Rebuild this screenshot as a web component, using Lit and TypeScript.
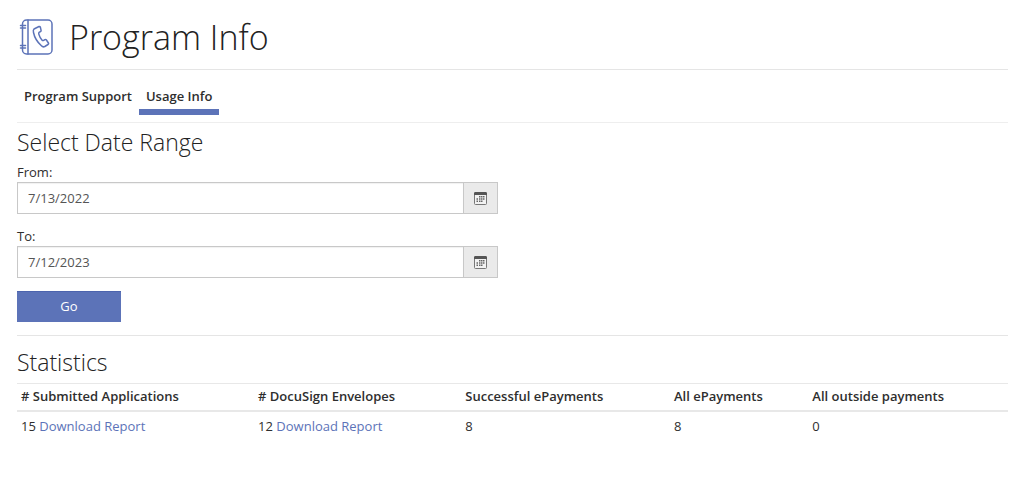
import { LitElement, html, css } from "lit";
import { customElement, property, state } from "lit/decorators.js";

@customElement("date-field")
class DateField extends LitElement {
  @property() label = "";
  @property() value = "";

  static styles = css`
    :host {
      display: block;
    }
    .label {
      display: block;
      line-height: 20px;
    }
    .group {
      display: flex;
      height: 32px;
      box-sizing: border-box;
      border: 1px solid #c8c8c8;
    }
    .input {
      flex: 1;
      min-width: 0;
      padding: 0 10px;
      border: 0;
      background: #fff;
      box-shadow: inset 0 1px 1px rgba(0, 0, 0, 0.06);
      color: #555;
      font: inherit;
    }
    .picker {
      display: flex;
      align-items: center;
      justify-content: center;
      width: 34px;
      padding: 0;
      border: 0;
      border-left: 1px solid #c8c8c8;
      background: #eaeaea;
      cursor: pointer;
    }
  `;

  render() {
    return html`
      <label class="label" for="date">${this.label}</label>
      <div class="group">
        <input class="input" id="date" type="text" .value=${this.value} />
        <button class="picker" type="button" aria-label="Open calendar">
          <svg width="13" height="13" viewBox="0 0 13 13" fill="#666">
            <rect x="0.5" y="0.5" width="12" height="12" rx="1" fill="#f2f2f2" stroke="#777" />
            <path fill="#555" d="M1 0h11l1 1v2H0V1z" />
            <path
              d="M5 4h1.5v1.5H5zM7 4h1.5v1.5H7zM9 4h1.5v1.5H9zM2.5 6.2H4v1.5H2.5zM5 6.2h1.5v1.5H5zM7 6.2h1.5v1.5H7zM9 6.2h1.5v1.5H9zM2.5 8.5H4V10H2.5zM5 8.5h1.5V10H5zM7 8.5h1.5V10H7z"
            />
          </svg>
        </button>
      </div>
    `;
  }
}

@customElement("app-root")
class AppRoot extends LitElement {
  @state() private tabs = [
    { name: "Program Support", active: false },
    { name: "Usage Info", active: true },
  ];
  @state() private stats = [
    { title: "# Submitted Applications", count: 15, report: true },
    { title: "# DocuSign Envelopes", count: 12, report: true },
    { title: "Successful ePayments", count: 8, report: false },
    { title: "All ePayments", count: 8, report: false },
    { title: "All outside payments", count: 0, report: false },
  ];

  static styles = css`
    :host {
      display: block;
      padding: 0 17px;
      background: #fff;
      color: #2e2e2e;
      font: 13px/20px "Open Sans", sans-serif;
    }
    .header {
      display: flex;
      align-items: center;
      gap: 13px;
      height: 70px;
      padding-top: 4px;
      box-sizing: border-box;
      border-bottom: 1px solid #e5e5e5;
    }
    .title,
    .heading {
      margin: 0;
      font-weight: 300;
      color: #222;
    }
    .title {
      font-size: 34px;
      line-height: 40px;
    }
    .heading {
      padding-bottom: 4px;
      font-size: 23px;
      line-height: 32px;
    }
    .tabs {
      display: flex;
      padding-top: 16px;
      padding-bottom: 7px;
      border-bottom: 1px solid #eee;
    }
    .tab {
      padding: 0 7px 3px;
      border-bottom: 6px solid transparent;
      color: inherit;
      font-weight: 600;
      text-decoration: none;
    }
    .tab.active {
      border-color: #5c73b8;
    }
    .range {
      display: grid;
      gap: 13px;
      padding: 3px 0 13px;
      border-bottom: 1px solid #e5e5e5;
    }
    .fields {
      display: grid;
      gap: 12px;
      width: calc(50% - 15px);
    }
    .go {
      justify-self: start;
      width: 104px;
      height: 31px;
      padding: 0 0 2px;
      border: 0;
      background: #5c73b8;
      box-shadow: inset 0 1px 0 #4c64ae;
      color: #fff;
      font: inherit;
      cursor: pointer;
    }
    .statistics {
      padding-top: 10px;
    }
    .table {
      width: 100%;
      margin-top: 1px;
      border-collapse: collapse;
    }
    .th,
    .td {
      padding: 4px;
      text-align: left;
    }
    .th {
      padding-top: 2px;
      border-top: 1px solid #e8e8e8;
      border-bottom: 2px solid #e8e8e8;
      font-weight: 600;
    }
    .link {
      color: #5c73b8;
      text-decoration: none;
    }
  `;

  render() {
    return html`
      <header class="header">
        <svg
          width="39"
          height="38"
          viewBox="0 0 39 38"
          fill="none"
          stroke="#5c73b8"
          stroke-width="1.5"
          stroke-linecap="round"
          stroke-linejoin="round"
          aria-hidden="true"
        >
          <rect x="5.5" y="2" width="29.5" height="34" rx="4" />
          <path d="M11 2v34M3.5 7.5h5M3.5 10h5M3.5 27.5h5M3.5 30h5" />
          <path
            d="M17 11 22 8.5q1-.3 1.4.8l.7 3q.2 1-.8 1.4l-1.2.7q-.7.6-.2 2 .9 3.3 3.2 5.8.7.7 1.6.1l1.2-.7q.9-.4 1.5.4l2 3q.6.9-.4 1.5l-3.2 2q-1.8 1-3.4-.7-6.4-5.8-7.9-13.3-.6-2.5.5-3.5z"
          />
        </svg>
        <h1 class="title">Program Info</h1>
      </header>
      <nav class="tabs">
        ${this.tabs.map(
          (tab) => html`<a class="tab ${tab.active ? "active" : ""}" href="#">${tab.name}</a>`
        )}
      </nav>
      <form class="range" @submit=${(e: Event) => e.preventDefault()}>
        <div>
          <h2 class="heading">Select Date Range</h2>
          <div class="fields">
            <date-field label="From:" value="7/13/2022"></date-field>
            <date-field label="To:" value="7/12/2023"></date-field>
          </div>
        </div>
        <button class="go" type="submit">Go</button>
      </form>
      <section class="statistics">
        <h2 class="heading">Statistics</h2>
        <table class="table">
          <thead>
            <tr>
              ${this.stats.map((s) => html`<th class="th" scope="col">${s.title}</th>`)}
            </tr>
          </thead>
          <tbody>
            <tr>
              ${this.stats.map(
                (s) => html`<td class="td">
                  ${s.count} ${s.report ? html`<a class="link" href="#">Download Report</a>` : ""}
                </td>`
              )}
            </tr>
          </tbody>
        </table>
      </section>
    `;
  }
}
